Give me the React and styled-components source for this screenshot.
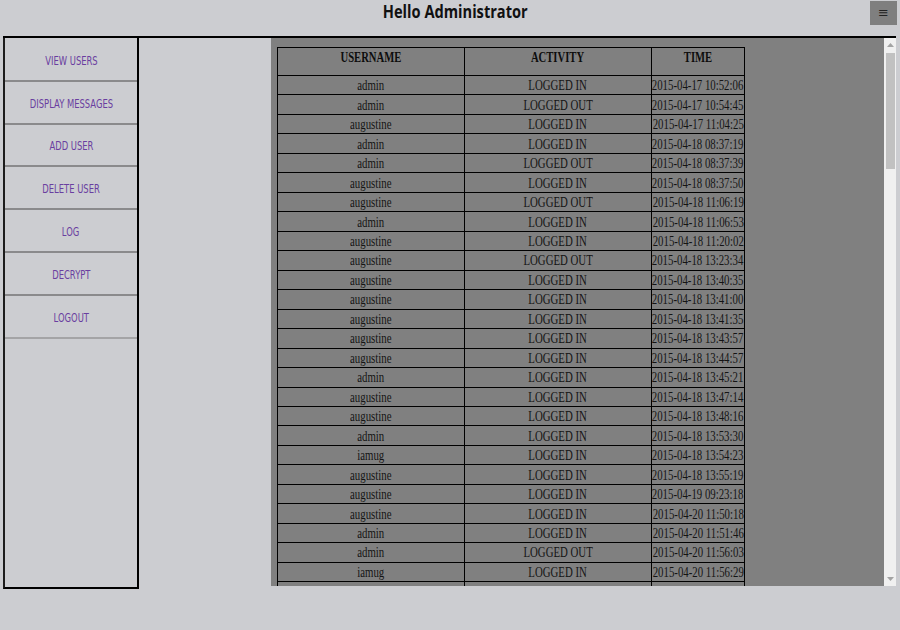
import React from 'react';
import styled, { createGlobalStyle } from 'styled-components';

const menu = ['VIEW USERS', 'DISPLAY MESSAGES', 'ADD USER', 'DELETE USER', 'LOG', 'DECRYPT', 'LOGOUT'];

const log = [
  ['admin', 'LOGGED IN', '2015-04-17 10:52:06'],
  ['admin', 'LOGGED OUT', '2015-04-17 10:54:45'],
  ['augustine', 'LOGGED IN', '2015-04-17 11:04:25'],
  ['admin', 'LOGGED IN', '2015-04-18 08:37:19'],
  ['admin', 'LOGGED OUT', '2015-04-18 08:37:39'],
  ['augustine', 'LOGGED IN', '2015-04-18 08:37:50'],
  ['augustine', 'LOGGED OUT', '2015-04-18 11:06:19'],
  ['admin', 'LOGGED IN', '2015-04-18 11:06:53'],
  ['augustine', 'LOGGED IN', '2015-04-18 11:20:02'],
  ['augustine', 'LOGGED OUT', '2015-04-18 13:23:34'],
  ['augustine', 'LOGGED IN', '2015-04-18 13:40:35'],
  ['augustine', 'LOGGED IN', '2015-04-18 13:41:00'],
  ['augustine', 'LOGGED IN', '2015-04-18 13:41:35'],
  ['augustine', 'LOGGED IN', '2015-04-18 13:43:57'],
  ['augustine', 'LOGGED IN', '2015-04-18 13:44:57'],
  ['admin', 'LOGGED IN', '2015-04-18 13:45:21'],
  ['augustine', 'LOGGED IN', '2015-04-18 13:47:14'],
  ['augustine', 'LOGGED IN', '2015-04-18 13:48:16'],
  ['admin', 'LOGGED IN', '2015-04-18 13:53:30'],
  ['iamug', 'LOGGED IN', '2015-04-18 13:54:23'],
  ['augustine', 'LOGGED IN', '2015-04-18 13:55:19'],
  ['augustine', 'LOGGED IN', '2015-04-19 09:23:18'],
  ['augustine', 'LOGGED IN', '2015-04-20 11:50:18'],
  ['admin', 'LOGGED IN', '2015-04-20 11:51:46'],
  ['admin', 'LOGGED OUT', '2015-04-20 11:56:03'],
  ['iamug', 'LOGGED IN', '2015-04-20 11:56:29'],
];

const GlobalStyle = createGlobalStyle`
  html, body {
    margin: 0;
    padding: 0;
    background: #cccdd1;
  }
  body {
    font-family: "Liberation Sans", Arial, sans-serif;
    overflow: hidden;
  }
`;

const Header = styled.header`
  height: 36px;
  display: grid;
  grid-template-columns: 1fr auto 1fr;
  align-items: start;
`;

const Title = styled.h1`
  grid-column: 2;
  margin: 0;
  padding: 1px 0 0 10px;
  font-family: "Open Sans", sans-serif;
  font-size: 17px;
  font-weight: 700;
  line-height: 22px;
  color: #111;
`;

const MenuButton = styled.button`
  justify-self: end;
  margin: 1px 3px 0 0;
  width: 27px;
  height: 24px;
  padding: 0;
  border: none;
  background: #7f7f7f;
  color: #222;
  font-family: "DejaVu Sans", sans-serif;
  font-size: 13px;
  line-height: 24px;
`;

const Main = styled.div`
  display: flex;
  margin: 0 4px 0 3px;
  border-top: 2px solid #000;
`;

const Sidebar = styled.nav`
  width: 132px;
  height: 548px;
  padding-top: 1px;
  border-left: 2px solid #1c1c1c;
  border-right: 2px solid #000;
  border-bottom: 2px solid #000;
  display: flex;
  flex-direction: column;
`;

const MenuItem = styled.a`
  height: 37.8px;
  padding-top: 3px;
  flex: none;
  display: flex;
  align-items: center;
  justify-content: center;
  border-bottom: 2px solid ${(p) => (p.$last ? '#a4a4a6' : '#8a8a8c')};
  color: #6a3ea0;
  font-family: "DejaVu Sans", sans-serif;
  font-size: 12px;
  text-decoration: none;
  cursor: pointer;
`;

// the screenshot's text is narrower than any installed face, so squeeze it
const Squeeze = styled.span`
  display: inline-block;
  white-space: nowrap;
  transform: scaleX(${(p) => p.$x});
  transform-origin: center;
`;

const Frame = styled.div`
  margin-left: 132px;
  width: 625px;
  height: 548px;
  display: flex;
  background: #808080;
`;

const Viewport = styled.div`
  flex: 1;
  overflow: hidden;
  padding: 9px 0 0 6px;
`;

const ScrollBar = styled.div`
  width: 12px;
  flex: none;
  display: flex;
  flex-direction: column;
  background: #f0f0f0;
`;

const ScrollArrow = styled.div`
  height: 14px;
  display: flex;
  align-items: center;
  justify-content: center;
`;

const ScrollTrack = styled.div`
  flex: 1;
  padding: 1px 1px 0 2px;
`;

const ScrollThumb = styled.div`
  height: 116px;
  background: #c1c1c1;
`;

const LogTable = styled.table`
  width: 464px;
  border-collapse: collapse;
  table-layout: fixed;
  font-family: "Liberation Serif", "Times New Roman", serif;
  font-size: 15px;
  color: #141414;
`;

const Th = styled.th`
  width: ${(p) => p.$w}px;
  height: 27px;
  padding: 0;
  vertical-align: top;
  border: 1px solid #000;
  font-weight: 700;
  line-height: 18px;
  color: #0d0d0d;
`;

const Td = styled.td`
  height: 18.48px;
  padding: 0;
  border: 1px solid #000;
  border-top-color: #2e2e2e;
  line-height: 18px;
`;

const Cell = styled.div`
  display: flex;
  justify-content: center;
`;

const Arrow = ({ up }) => (
  <svg width="7" height="4" viewBox="0 0 7 4">
    <path d={up ? 'M0 4L3.5 0L7 4Z' : 'M0 0L3.5 4L7 0Z'} fill="#a3a3a3" />
  </svg>
);

const App = () => {
  return (
    <>
      <GlobalStyle />
      <Header>
        <Title>
          <Squeeze $x={0.86}>Hello Administrator</Squeeze>
        </Title>
        <MenuButton>≡</MenuButton>
      </Header>
      <Main>
        <Sidebar>
          {menu.map((item, idx) => (
            <MenuItem key={item} $last={idx === menu.length - 1}>
              <Squeeze $x={0.7}>{item}</Squeeze>
            </MenuItem>
          ))}
        </Sidebar>
        <Frame>
          <Viewport>
            <LogTable>
              <thead>
                <tr>
                  <Th $w={186}><Cell><Squeeze $x={0.71}>USERNAME</Squeeze></Cell></Th>
                  <Th $w={186}><Cell><Squeeze $x={0.71}>ACTIVITY</Squeeze></Cell></Th>
                  <Th $w={92}><Cell><Squeeze $x={0.71}>TIME</Squeeze></Cell></Th>
                </tr>
              </thead>
              <tbody>
                {log.map(([user, activity, time], idx) => (
                  <tr key={`log-row-${idx}`}>
                    <Td><Cell><Squeeze $x={0.72}>{user}</Squeeze></Cell></Td>
                    <Td><Cell><Squeeze $x={0.72}>{activity}</Squeeze></Cell></Td>
                    <Td><Cell><Squeeze $x={0.72}>{time}</Squeeze></Cell></Td>
                  </tr>
                ))}
                <tr>
                  <Td />
                  <Td />
                  <Td />
                </tr>
              </tbody>
            </LogTable>
          </Viewport>
          <ScrollBar>
            <ScrollArrow><Arrow up /></ScrollArrow>
            <ScrollTrack>
              <ScrollThumb />
            </ScrollTrack>
            <ScrollArrow><Arrow /></ScrollArrow>
          </ScrollBar>
        </Frame>
      </Main>
    </>
  );
};

export default App;
